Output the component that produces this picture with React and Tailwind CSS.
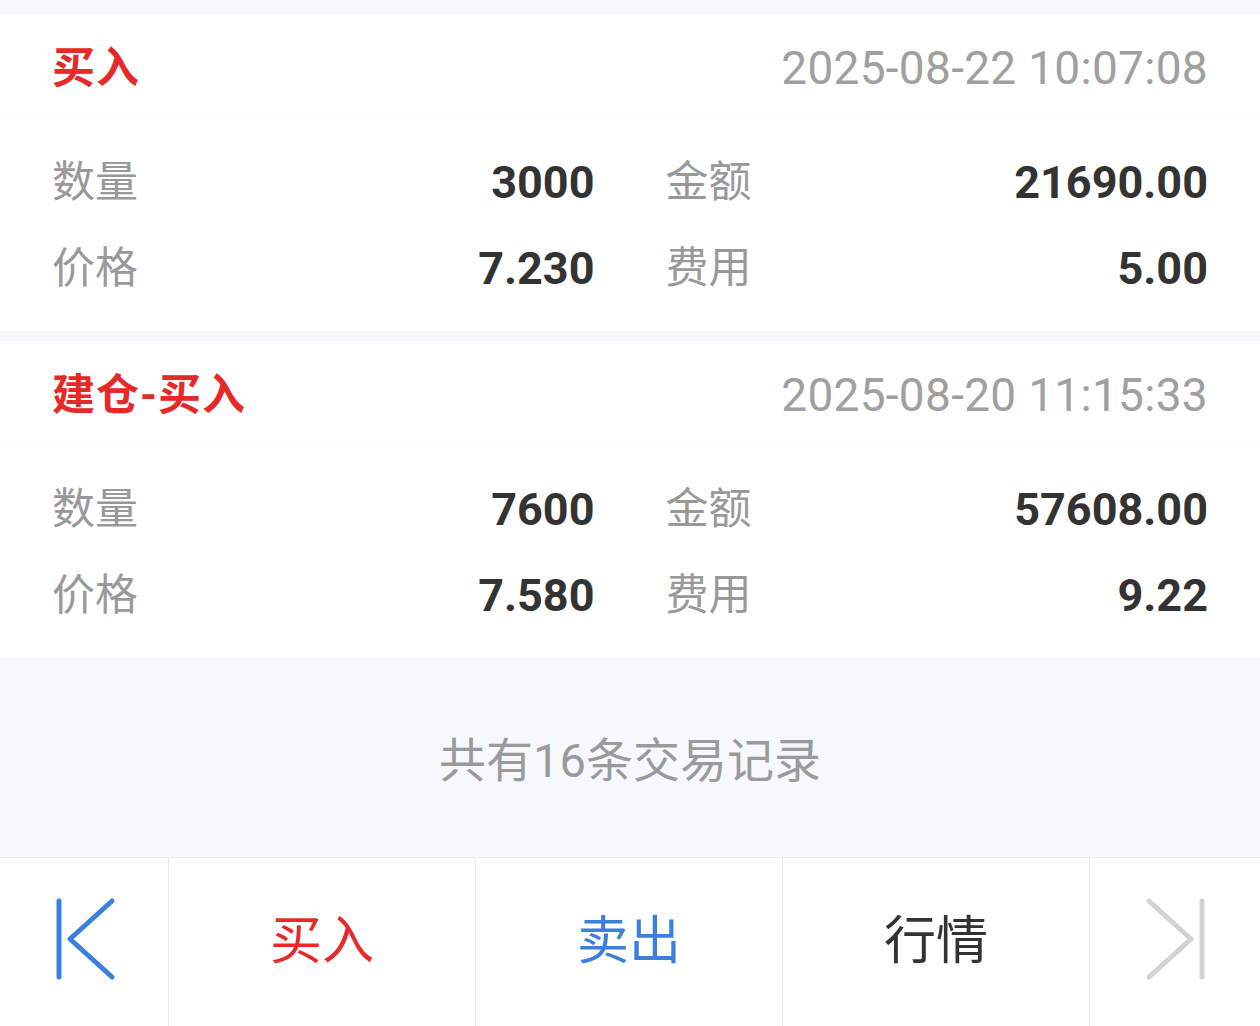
import React from 'react';

const trades = [
    { title: '买入', time: '2025-08-22 10:07:08', qty: '3000', amount: '21690.00', price: '7.230', fee: '5.00' },
    { title: '建仓-买入', time: '2025-08-20 11:15:33', qty: '7600', amount: '57608.00', price: '7.580', fee: '9.22' },
];

const font = { fontFamily: 'Roboto, "Noto Sans CJK SC", sans-serif' };

const Cell = ({ label, value }) => (
    <div className="flex items-center justify-between h-[86px]">
        <span className="text-[#999999] text-[43px] leading-none">{label}</span>
        <span className="text-[#333333] text-[45px] font-bold leading-none">{value}</span>
    </div>
);

const TradeCard = ({ t }) => (
    <div className="bg-white">
        <div className="flex items-center justify-between h-[103px] pt-[6px] px-[52px] border-b border-[#f3f4f6]">
            <span className="text-[#e62a2a] text-[43px] font-bold leading-none tracking-[1px]">{t.title}</span>
            <span className="text-[#a0a0a0] text-[46px] leading-none tracking-[0.3px]">{t.time}</span>
        </div>
        <div className="grid grid-cols-2 gap-x-[71px] px-[52px] pt-[22px] pb-[20px]">
            <Cell label="数量" value={t.qty} />
            <Cell label="金额" value={t.amount} />
            <Cell label="价格" value={t.price} />
            <Cell label="费用" value={t.fee} />
        </div>
    </div>
);

export default function App() {
    return (
        <div className="w-[1260px] h-[1026px] bg-[#f6f8fd] flex flex-col overflow-hidden" style={font}>
            <div className="h-[14px]" />
            <TradeCard t={trades[0]} />
            <div className="h-[10px]" />
            <TradeCard t={trades[1]} />
            <div className="flex-1 flex items-center justify-center pt-[6px]">
                <span className="text-[#9a9a9a] text-[47px] leading-none">共有16条交易记录</span>
            </div>
            <div className="h-[169px] bg-white border-t border-[#ebedf0] flex">
                <div className="w-[169px] flex items-center justify-center border-r border-[#ececec]">
                    <svg width="64" height="84" viewBox="0 0 64 84" className="-mt-[6px] ml-[4px]">
                        <path d="M5 4 V80" stroke="#3a80dc" strokeWidth="5" strokeLinecap="round" fill="none" />
                        <path d="M58 4 L16 42 L58 80" stroke="#3a80dc" strokeWidth="5" strokeLinecap="round" strokeLinejoin="round" fill="none" />
                    </svg>
                </div>
                <div className="w-[307px] flex items-center justify-center border-r border-[#ececec]">
                    <span className="text-[#e62a2a] text-[52px] leading-none">买入</span>
                </div>
                <div className="w-[307px] flex items-center justify-center border-r border-[#ececec]">
                    <span className="text-[#3a80dc] text-[52px] leading-none">卖出</span>
                </div>
                <div className="w-[307px] flex items-center justify-center border-r border-[#ececec]">
                    <span className="text-[#333333] text-[52px] leading-none">行情</span>
                </div>
                <div className="flex-1 flex items-center justify-center">
                    <svg width="64" height="84" viewBox="0 0 64 84" className="-mt-[6px] ml-[4px]">
                        <path d="M4 4 L46 42 L4 80" stroke="#d3d3d3" strokeWidth="5" strokeLinecap="round" strokeLinejoin="round" fill="none" />
                        <path d="M57 4 V80" stroke="#d3d3d3" strokeWidth="5" strokeLinecap="round" fill="none" />
                    </svg>
                </div>
            </div>
        </div>
    );
}
